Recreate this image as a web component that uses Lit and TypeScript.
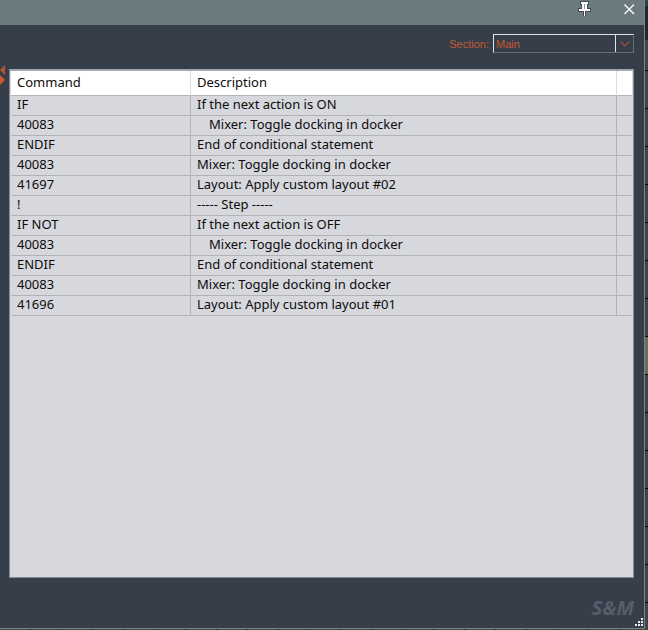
import { LitElement, html, css } from "lit";
import { customElement, state } from "lit/decorators.js";
import { classMap } from "lit/directives/class-map.js";

interface Action {
  command: string;
  description: string;
  nested?: boolean;
}

const ACTIONS: Action[] = [
  { command: "IF", description: "If the next action is ON" },
  { command: "40083", description: "Mixer: Toggle docking in docker", nested: true },
  { command: "ENDIF", description: "End of conditional statement" },
  { command: "40083", description: "Mixer: Toggle docking in docker" },
  { command: "41697", description: "Layout: Apply custom layout #02" },
  { command: "!", description: "----- Step -----" },
  { command: "IF NOT", description: "If the next action is OFF" },
  { command: "40083", description: "Mixer: Toggle docking in docker", nested: true },
  { command: "ENDIF", description: "End of conditional statement" },
  { command: "40083", description: "Mixer: Toggle docking in docker" },
  { command: "41696", description: "Layout: Apply custom layout #01" },
];

@customElement("action-table")
export class ActionTable extends LitElement {
  static styles = css`
    :host {
      display: block;
      background: #d7d8dd;
      border: 1px solid #868b93;
      border-top: 2px solid #a3a7ad;
      padding: 0 1px 1px;
      box-sizing: border-box;
    }
    .table {
      width: 100%;
      border-collapse: separate;
      border-spacing: 0;
      table-layout: fixed;
      font: 13px/17px "Noto Sans", sans-serif;
      color: #0c0c0c;
    }
    .command { width: 180px; }
    .spare { width: 15px; }
    .head, .cell {
      box-sizing: border-box;
      padding: 0 6px 2px;
      text-align: left;
      font-weight: 400;
      white-space: nowrap;
      border-bottom: 1px solid #b1b3b7;
      border-right: 1px solid #b1b3b7;
    }
    .head {
      height: 25px;
      background: #fff;
      border-right-color: #dcdde0;
    }
    .cell { height: 20px; }
    .head:last-child, .cell:last-child { border-right: 0; }
    .nested { padding-left: 18px; }
  `;

  render() {
    return html`
      <table class="table">
        <colgroup>
          <col class="command" />
          <col />
          <col class="spare" />
        </colgroup>
        <thead>
          <tr>
            <th class="head" scope="col">Command</th>
            <th class="head" scope="col">Description</th>
            <td class="head"></td>
          </tr>
        </thead>
        <tbody>
          ${ACTIONS.map(
            (a) => html`<tr>
              <td class="cell">${a.command}</td>
              <td class=${classMap({ cell: true, nested: !!a.nested })}>${a.description}</td>
              <td class="cell"></td>
            </tr>`
          )}
        </tbody>
      </table>
    `;
  }
}

@customElement("app-root")
export class AppRoot extends LitElement {
  @state() private section = "Main";

  static styles = css`
    :host {
      display: grid;
      grid-template-columns: minmax(0, 1fr) 3px;
      grid-template-rows: minmax(0, 1fr) 1px;
      min-height: 100vh;
      font-family: "Liberation Sans", sans-serif;
    }
    .window {
      display: flex;
      flex-direction: column;
      background: #363e4a;
      border-right: 1px solid #7b8389;
      border-bottom: 1px solid #7b8389;
    }
    .side {
      grid-row: span 2;
      background:
        linear-gradient(#1f4855 0 6px, #20272d 6px 40px, transparent 40px) no-repeat,
        linear-gradient(transparent 337px, #687059 337px 374px, transparent 374px) no-repeat,
        repeating-linear-gradient(#3e4549 0 37px, #050607 37px 38px) 0 33px;
    }
    .under {
      background: repeating-linear-gradient(90deg, #3e4549 0 30px, #14181c 30px 31px);
    }
    .titlebar {
      display: flex;
      justify-content: flex-end;
      align-items: flex-start;
      gap: 28px;
      height: 25px;
      padding-right: 6px;
      background: #6a7a7f;
    }
    .tool {
      display: block;
      padding: 0;
      border: 0;
      background: none;
    }
    .tool svg, .splitter svg, .grip { display: block; }
    .bar {
      display: flex;
      justify-content: flex-end;
      align-items: center;
      gap: 4px;
      padding: 9px 10px 16px;
      font-size: 11px;
      color: #c4582f;
    }
    .picker {
      position: relative;
      display: block;
      width: 141px;
      height: 19px;
    }
    .select {
      appearance: none;
      display: block;
      width: 100%;
      height: 100%;
      box-sizing: border-box;
      padding: 0 20px 0 2px;
      border: 1px solid;
      border-color: #dfe3ee #656d77 #656d77 #dfe3ee;
      border-radius: 0;
      background: transparent;
      color: inherit;
      font: inherit;
    }
    .drop {
      position: absolute;
      inset: 1px 1px 1px auto;
      width: 17px;
      border-left: 1px solid #dfe3ee;
      display: grid;
      place-items: center;
      pointer-events: none;
    }
    .body {
      flex: 1;
      display: grid;
      grid-template-columns: 9px minmax(0, 1fr);
      padding-right: 10px;
    }
    .splitter {
      align-self: start;
      padding: 0;
      border: 0;
      background: none;
      margin-top: -4px;
    }
    .footer {
      position: relative;
      display: flex;
      justify-content: flex-end;
      align-items: center;
      height: 50px;
      padding: 10px 10px 0;
      box-sizing: border-box;
    }
    .brand {
      font: italic 700 20px/24px "Noto Sans", sans-serif;
      color: #565d69;
    }
    .grip {
      position: absolute;
      right: 1px;
      bottom: 1px;
    }
  `;

  render() {
    return html`
      <main class="window">
        <header class="titlebar">
          <button class="tool" aria-label="Pin window">
            <svg width="14" height="18" viewBox="0 0 14 18">
              <path d="M2 1h9v4h-1v3h3v4H8v4H5v-4H0V8h3V5H2z" fill="#3f484d" />
              <path d="M3 2h7v2H9v5h3v2H7v5H6v-5H1V9h3V4H3z" fill="#fff" />
              <path d="M6.500 4v5" stroke="#8d989c" />
            </svg>
          </button>
          <button class="tool" aria-label="Close">
            <svg width="18" height="18" viewBox="0 0 18 18">
              <path d="M4.500 4.500l9.500 9.500M14 4.500L4.500 14" stroke="#f4f6f6" stroke-width="1.500" />
            </svg>
          </button>
        </header>
        <div class="bar">
          <label for="section">Section:</label>
          <span class="picker">
            <select
              id="section"
              class="select"
              .value=${this.section}
              @change=${(e: Event) => (this.section = (e.target as HTMLSelectElement).value)}
            >
              <option>Main</option>
            </select>
            <span class="drop">
              <svg width="10" height="6" viewBox="0 0 10 6">
                <path d="M.7.7L5 5 9.3.7" fill="none" stroke="#a6523a" stroke-width="1.2" />
              </svg>
            </span>
          </span>
        </div>
        <div class="body">
          <button class="splitter" aria-label="Toggle side panel">
            <svg width="6" height="20" viewBox="0 0 6 20">
              <path d="M5 0v10L0 5z" fill="#b9552e" />
              <path d="M0 10l5 5-5 5z" fill="#c85a2b" />
            </svg>
          </button>
          <action-table></action-table>
        </div>
        <footer class="footer">
          <span class="brand">S&amp;M</span>
          <svg class="grip" width="9" height="9" viewBox="0 0 9 9">
            <path
              d="M7 1h2M4 4h2M7 4h2M1 7h2M4 7h2M7 7h2"
              stroke="#e8ebee"
              stroke-width="2"
            />
          </svg>
        </footer>
      </main>
      <div class="side"></div>
      <div class="under"></div>
    `;
  }
}
